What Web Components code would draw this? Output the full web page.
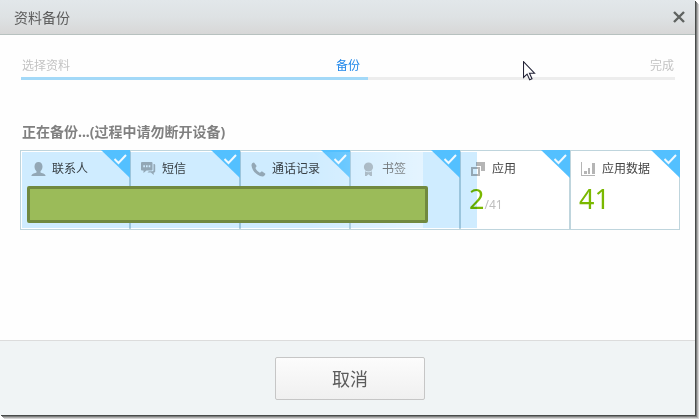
<!DOCTYPE html>
<html lang="zh-CN">
<head>
<meta charset="utf-8">
<title>资料备份</title>
<style>
    body {
        margin: 0;
        background: #fff;
        font-family: "Noto Sans", "Noto Sans CJK SC", sans-serif;
        font-size: 12px;
        line-height: 18px;
        color: #444;
    }
</style>
</head>
<body>

<template id="backup-dialog-template">
    <style>
        :host {
            box-sizing: border-box;
            display: flex;
            height: 100vh;
            padding: 0 4px 4px 0;
            position: relative;
            overflow: hidden;
        }

        section {
            flex: 1;
            display: flex;
            flex-direction: column;
            background: #fefefe;
            box-shadow: 1px 1px 0 #484b4a, 2px 2px 0 #7c7e7d, 3px 3px 0 #adadad, 4px 4px 0 #d4d4d4;
        }

        header {
            display: flex;
            align-items: center;
            justify-content: space-between;
            height: 34px;
            padding: 0 8px 0 14px;
            background: linear-gradient(#e2e7ea, #dee2e4 50%, #d7d7d7);
            border-bottom: 1px solid #b7c1bf;
        }

        h1 {
            margin: 0;
            padding-top: 2px;
            font-size: 14px;
            font-weight: normal;
            color: #5c5c5c;
        }

        .close {
            display: flex;
            padding: 2px;
            border: 0;
            background: none;
        }

        main {
            flex: 1;
            padding: 22px 15px 0 20px;
        }

        h2 {
            margin: 42px 0 8px 2px;
            font-size: 14px;
            line-height: 20px;
            font-weight: bold;
            color: #808080;
        }

        footer {
            display: flex;
            justify-content: center;
            padding: 16px 15px 15px 20px;
            background: #f0f4f5;
            border-top: 1px solid #dcdcdc;
        }

        .cancel {
            width: 150px;
            height: 43px;
            padding: 0;
            border: 1px solid #c6c6c6;
            border-radius: 2px;
            background: linear-gradient(#fcfcfc, #f0f0f0);
            font: inherit;
            font-size: 18px;
            color: #5c5c5c;
        }
    </style>
    <section role="dialog" aria-labelledby="title">
        <header>
            <h1 id="title">资料备份</h1>
            <button class="close" aria-label="关闭">
                <svg width="12" height="12" viewBox="0 0 12 12"><path d="M1 1l10 10M11 1L1 11" fill="none" stroke="#5f6361" stroke-width="2.4"/></svg>
            </button>
        </header>
        <main>
            <slot name="steps"></slot>
            <h2><slot name="status"></slot></h2>
            <slot></slot>
        </main>
        <footer><button class="cancel">取消</button></footer>
    </section>
    <slot name="pointer"></slot>
</template>

<template id="backup-steps-template">
    <style>
        :host {
            display: block;
            margin: 0 5px 0 1px;
        }

        .labels {
            display: grid;
            grid-template-columns: 1fr auto 1fr;
            padding: 0 1px;
            color: #c3c3c3;
        }

        ::slotted(:last-child) {
            text-align: right;
        }

        ::slotted(.active) {
            color: #1e86ea;
        }

        .track {
            height: 3px;
            margin-top: 2px;
            background: #ededed;
        }

        .fill {
            height: 3px;
            background: #a3d9f8;
        }
    </style>
    <div class="labels"><slot></slot></div>
    <div class="track"><div class="fill"></div></div>
</template>

<template id="backup-list-template">
    <style>
        :host {
            display: grid;
            grid-auto-flow: column;
            grid-auto-columns: 1fr;
            position: relative;
        }

        .progress {
            position: absolute;
            top: 2px;
            bottom: 2px;
            left: 2px;
            background: #cfecff;
            mix-blend-mode: multiply;
            pointer-events: none;
        }

        .shine {
            position: absolute;
            z-index: 2;
            top: 2px;
            bottom: 2px;
            left: 44%;
            width: 17%;
            background: linear-gradient(90deg, rgba(255, 255, 255, 0), rgba(255, 255, 255, .45));
            pointer-events: none;
        }

        .cover {
            box-sizing: border-box;
            position: absolute;
            z-index: 2;
            top: 36px;
            left: 7px;
            width: calc(61% - 2px);
            height: 37px;
            border: 3px solid #71893f;
            border-radius: 2px;
            background: #9bbb59;
        }
    </style>
    <slot></slot>
    <div class="progress" role="progressbar" aria-label="备份"></div>
    <div class="shine"></div>
    <div class="cover"></div>
</template>

<template id="backup-item-template">
    <style>
        :host {
            box-sizing: border-box;
            display: block;
            height: 80px;
            border: 1px solid #bfd5dd;
            position: relative;
            background: #fff;
        }

        label {
            display: flex;
            align-items: center;
            gap: 6px;
            padding: 9px 0 0 10px;
            white-space: nowrap;
        }

        .icon {
            width: 15px;
            height: 15px;
            color: #b5b5b5;
        }

        input {
            appearance: none;
            position: absolute;
            z-index: 1;
            top: -1px;
            right: -1px;
            width: 29px;
            height: 28px;
            margin: 0;
            background: #53c0ff;
            clip-path: polygon(0 0, 100% 0, 100% 100%);
        }

        .tick {
            position: absolute;
            z-index: 1;
            top: 2px;
            right: 2px;
            fill: none;
            stroke: #f0f9ff;
            stroke-width: 2;
            pointer-events: none;
        }

        .count {
            padding-left: 8px;
            line-height: 42px;
            color: #bebebe;
        }

        b {
            font-size: 27px;
            font-weight: normal;
            color: #7ab800;
        }
    </style>
    <label>
        <svg class="icon" viewBox="0 0 15 15" fill="currentColor"></svg>
        <slot></slot>
        <input type="checkbox" checked>
        <svg class="tick" width="14" height="12" viewBox="0 0 14 12"><path d="M1.5 6l4 4L13 2"/></svg>
    </label>
    <div class="count"></div>
</template>

<template id="mouse-pointer-template">
    <style>
        :host {
            position: absolute;
            top: 61px;
            left: 75%;
            margin-left: -1px;
            pointer-events: none;
        }

        svg {
            display: block;
        }
    </style>
    <svg width="13" height="20" viewBox="0 0 13 20"><path d="M.5.7v15.8l3.6-3.4 2.6 5.6 2.3-1-2.5-5.5h5z" fill="#fff" stroke="#222236" stroke-width="1.1"/></svg>
</template>

<backup-dialog>
    <backup-steps slot="steps" value="53">
        <span>选择资料</span>
        <span class="active">备份</span>
        <span>完成</span>
    </backup-steps>
    <span slot="status">正在备份...(过程中请勿断开设备)</span>
    <backup-list value="69">
        <backup-item icon="contact">联系人</backup-item>
        <backup-item icon="message">短信</backup-item>
        <backup-item icon="phone">通话记录</backup-item>
        <backup-item icon="bookmark">书签</backup-item>
        <backup-item icon="app" done="2" total="41">应用</backup-item>
        <backup-item icon="data" done="41">应用数据</backup-item>
    </backup-list>
    <mouse-pointer slot="pointer"></mouse-pointer>
</backup-dialog>

<script>
    const icons = {
        contact: '<path d="M7.5 0C5 0 3.5 1.800 3.500 4.500c0 2 .8 3.700 2 4.700v1.300C4.500 11.300.4 11.500.4 14h14.200c0-2.500-4.100-2.700-5.100-3.500V9.200c1.200-1 2-2.700 2-4.700C11.500 1.800 10 0 7.500 0z"/>',
        message: '<path fill-rule="evenodd" d="M1 0h9.500q1 0 1 1v6.500q0 1-1 1H5.500L2.500 11V8.500H1q-1 0-1-1V1q0-1 1-1zM2.300 3.300v1.900h1.600V3.300zm2.700 0v1.900h1.600V3.300zm2.700 0v1.900h1.600V3.300z"/><path d="M12.500 2H13q1.200 0 1.200 1v6.500q0 1-1.200 1h-.3V13l-2.800-2.500H6.500l1.300-1.200h3.700q1 0 1-1z"/>',
        phone: '<path d="M3 .6C1.500.8.300 2 .5 3.500c.7 5.500 5.400 10.300 11 10.900 1.500.1 2.700-1.300 2.900-2.600l-3.500-2.500-2 1.400C6.800 9.600 5.300 8 4.400 6L5.700 4z"/>',
        bookmark: '<circle cx="7.500" cy="5" r="4.600"/><path d="M4 9.300q3.500 2 7 0V14H9.400l-1.900-1.700L5.600 14H4z"/>',
        app: '<path d="M5 0h9v9h-4V4H5z"/><path fill-rule="evenodd" d="M0 5h9v9H0zm2 2v5h5V7z"/>',
        data: '<path d="M0 0h1v13h13v1H0zM3 9h3v3H3zM7 6h2v6H7zM11 1h3v11h-3z"/>'
    }

    function stamp(host, name) {
        const template = document.querySelector(`#${name}-template`)
        const shadowRoot = host.attachShadow({mode: 'open'})
        shadowRoot.appendChild(template.content.cloneNode(true))
        return shadowRoot
    }

    customElements.define('backup-item', class BackupItem extends HTMLElement {
        constructor() {
            super()
            stamp(this, 'backup-item')
        }

        connectedCallback() {
            this.shadowRoot.querySelector('.icon').innerHTML = icons[this.getAttribute('icon')] || ''

            const count = this.shadowRoot.querySelector('.count')
            count.textContent = ''
            if (this.getAttribute('done')) {
                const done = document.createElement('b')
                done.textContent = this.getAttribute('done')
                count.appendChild(done)
            }
            if (this.getAttribute('total'))
                count.append('/' + this.getAttribute('total'))
        }
    })

    customElements.define('backup-list', class BackupList extends HTMLElement {
        constructor() {
            super()
            stamp(this, 'backup-list')
        }

        connectedCallback() {
            const progress = this.shadowRoot.querySelector('.progress')
            progress.style.width = this.getAttribute('value') + '%'
            progress.setAttribute('aria-valuenow', this.getAttribute('value'))
        }
    })

    customElements.define('backup-steps', class BackupSteps extends HTMLElement {
        constructor() {
            super()
            stamp(this, 'backup-steps')
        }

        connectedCallback() {
            this.shadowRoot.querySelector('.fill').style.width = this.getAttribute('value') + '%'
        }
    })

    customElements.define('mouse-pointer', class MousePointer extends HTMLElement {
        constructor() {
            super()
            stamp(this, 'mouse-pointer')
        }
    })

    customElements.define('backup-dialog', class BackupDialog extends HTMLElement {
        constructor() {
            super()
            stamp(this, 'backup-dialog')
        }
    })
</script>
</body>
</html>
